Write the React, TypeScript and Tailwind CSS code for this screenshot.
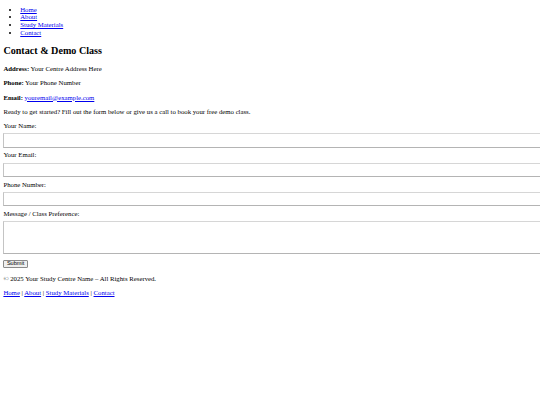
import React from "react";

const link = "text-[#0000ee] underline";
const field =
  "my-[3.375px] box-content block w-full border border-t-[#d6d6d6] border-x-[#c4c4c4] border-b-[#b4b4b4] px-[3.375px] outline-none";

export default function App() {
  return (
    <div className="min-h-[405px] w-full overflow-hidden bg-white">
      <div className="px-[3.375px] pt-[3.375px] text-[6.75px] leading-[1.15] text-black" style={{ fontFamily: '"Liberation Serif", "Times New Roman", serif' }}>
        <nav>
          <ul className="mt-[2.2px] mb-[3.375px] list-disc pl-[16.875px]">
            <li><a className={link} href="#">Home</a></li>
            <li><a className={link} href="#">About</a></li>
            <li><a className={link} href="#">Study Materials</a></li>
            <li><a className={link} href="#">Contact</a></li>
          </ul>
        </nav>
        <h2 className="mt-[8.7px] mb-[8px] text-[10.125px] font-bold leading-[1.15]">Contact &amp; Demo Class</h2>
        <p className="my-[6.6px]"><strong>Address:</strong> Your Centre Address Here</p>
        <p className="my-[6.6px]"><strong>Phone:</strong> Your Phone Number</p>
        <p className="my-[6.6px]"><strong>Email:</strong> <a className={link} href="#">youremail@example.com</a></p>
        <p className="my-[6.6px]">Ready to get started? Fill out the form below or give us a call to book your free demo class.</p>
        <form className="mt-[5.2px]">
          <label className="block">Your Name:</label>
          <input type="text" className={`${field} h-[12.65px]`} />
          <label className="block">Your Email:</label>
          <input type="email" className={`${field} h-[12.65px]`} />
          <label className="block">Phone Number:</label>
          <input type="tel" className={`${field} h-[12.65px]`} />
          <label className="block">Message / Class Preference:</label>
          <textarea className={`${field} h-[31.5px] resize-none`} />
          <button type="button" className="mt-[6px] block h-[7.6px] rounded-[1px] border border-[#8a8a8a] bg-[#efefef] px-[2.5px] text-[5.6px] leading-none text-black" style={{ fontFamily: '"Liberation Sans", Arial, sans-serif' }}>Submit</button>
        </form>
        <footer>
          <p className="my-[6.75px]">© 2025 Your Study Centre Name – All Rights Reserved.</p>
          <p className="my-[6.75px]">
            <a className={link} href="#">Home</a> | <a className={link} href="#">About</a> | <a className={link} href="#">Study Materials</a> | <a className={link} href="#">Contact</a>
          </p>
        </footer>
      </div>
    </div>
  );
}
